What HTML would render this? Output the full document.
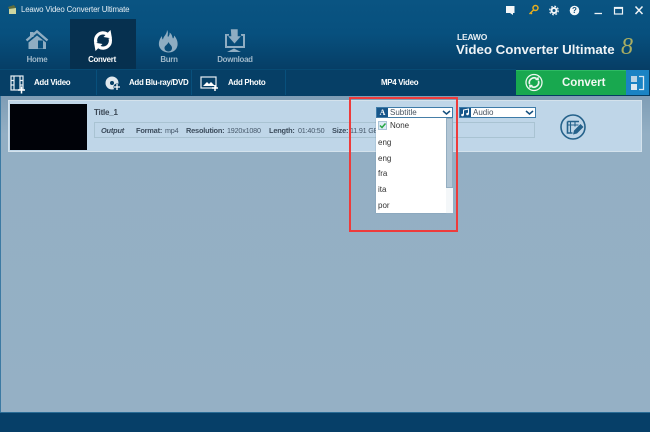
<!DOCTYPE html>
<html><head><meta charset="utf-8"><style>
html,body{margin:0;padding:0}
body{width:650px;height:432px;overflow:hidden;position:relative;background:#8fabc1;font-family:"Liberation Sans",sans-serif}
.a{position:absolute;white-space:nowrap}
.w{color:#fff;font-weight:bold;font-size:7.9px;letter-spacing:-.28px;line-height:12px}
.n{color:#9fb8c9;font-weight:bold;font-size:7.9px;letter-spacing:-.28px;line-height:12px;text-align:center}
.d{color:#46586a;font-size:7.2px;letter-spacing:-.2px;line-height:10px}
.db{color:#3c4c5c;font-size:7.4px;letter-spacing:-.2px;line-height:10px;font-weight:bold}
.o{left:378px;width:56px;color:#333;font-size:8px;line-height:12px}
</style></head><body>
<div class="a" style="left:0;top:0;width:650px;height:96px;background:linear-gradient(#0a5482,#07507e 35%,#063e66 72%,#063c62)"></div>
<div class="a" style="left:70px;top:19px;width:66px;height:50px;background:#06304f"></div>
<div class="a" style="left:0;top:69px;width:516px;height:27px;background:#063f66;border-top:1px solid #074a73;box-sizing:border-box"></div>
<div class="a" style="left:96px;top:70px;width:1px;height:25px;background:#08507c"></div>
<div class="a" style="left:191px;top:70px;width:1px;height:25px;background:#08507c"></div>
<div class="a" style="left:285px;top:70px;width:1px;height:25px;background:#08507c"></div>
<div class="a" style="left:0;top:96px;width:650px;height:316px;background:linear-gradient(#7f9db5,#93afc4 12%,#95b0c5)"></div>
<div class="a" style="left:0;top:96px;width:1px;height:316px;background:#3c7aa3"></div>
<div class="a" style="left:0;top:412px;width:650px;height:20px;background:#063f68;border-top:1px solid #2a6c96;box-sizing:border-box"></div>

<div class="a" style="left:21px;top:4px;color:#e4edf3;font-size:7.9px;letter-spacing:-.17px;line-height:12px">Leawo Video Converter Ultimate</div>
<svg class="a" style="left:0;top:0" width="650" height="100" viewBox="0 0 650 100">
<rect x="9" y="8" width="7" height="6" fill="#cdd6a0"/><path d="M8 7l6-2 2 3-7 1z" fill="#5d6b3c"/>
<!-- home -->
<path d="M26.500 40.500L37 31.500l10.500 9" fill="none" stroke="#8fadc2" stroke-width="2.400"/>
<rect x="30" y="32" width="3.500" height="5" fill="#8fadc2"/>
<path d="M37 35.500l-8.500 7V49h17.500v-6.500z" fill="#8fadc2"/>
<rect x="38" y="40.500" width="5" height="8" fill="#0a4f7b"/>
<!-- convert -->
<path d="M96 43A7.500 7.500 0 0 1 107 34" fill="none" stroke="#fff" stroke-width="3.200"/>
<path d="M103.500 37L112 38.500 110.500 30z" fill="#fff"/>
<path d="M110 38A7.500 7.500 0 0 1 99 47" fill="none" stroke="#fff" stroke-width="3.200"/>
<path d="M102.500 44L94 42.500 95.500 51z" fill="#fff"/>
<!-- burn -->
<path d="M167 30c2 3 0 5 1 7 1-1 2-3 1.500-4.500 3 2 2.500 4.500 3.500 6 1-.5 1-2 1-3 3 3 4 7 3.500 10-1 5-5 7-9 7s-8.500-2.500-9.500-7c-.5-4 1-7 3-9.500 0 1.500 0 3 1 3.500 .5-3.500 4-5 4-9.500z" fill="#8fadc2"/>
<path d="M168.500 42c1 2.500 3.500 3.500 3.500 6s-2 3.500-3.500 3.500-4-1-4-3.500 3-3 4-6z" fill="#0a4b76"/>
<!-- download -->
<path d="M229 35h-3v12h18V35h-3" fill="none" stroke="#8fadc2" stroke-width="2"/>
<path d="M230.500 29h7.500v7h3.500l-7 8-7-8h3.500z" fill="#8fadc2" stroke="#0a4f7b" stroke-width=".6"/>
<path d="M227 52l7-3.500 7 3.500z" fill="#8fadc2"/>
<!-- toolbar -->
<g fill="none" stroke="#e8eff4" stroke-width="1.200"><rect x="11" y="76" width="12" height="14"/><path d="M14 76v14M20 76v14M11 80.500h3M11 85h3M20 80.500h3M20 85h3"/></g><path d="M18 90h7M21.500 86.500v7" stroke="#fff" stroke-width="1.500"/>
<circle cx="112" cy="83" r="6.500" fill="#dfe8ee"/><circle cx="112" cy="83" r="2" fill="#063f66"/><circle cx="117" cy="87" r="3.500" fill="#063f66"/><path d="M114 87h6M117 84v6" stroke="#fff" stroke-width="1.300"/>
<rect x="201" y="77" width="15" height="11" fill="none" stroke="#e8eff4" stroke-width="1.200"/><path d="M203 86l4-4 2 2 2-2 4 4z" fill="#fff"/><path d="M212 88h6M215 85v6" stroke="#fff" stroke-width="1.500"/>
<!-- window controls -->
<rect x="506" y="6" width="8.500" height="7" fill="#f3f6f8"/><path d="M513 13v2l-3-2z" fill="#f3f6f8"/>
<circle cx="535.500" cy="8" r="2.500" fill="none" stroke="#e9ae1c" stroke-width="1.500"/><path d="M533.500 10l-4 4M530.500 12.500l1.500 1.500" stroke="#e9ae1c" stroke-width="1.400" fill="none"/>
<circle cx="554" cy="10.500" r="2.500" fill="none" stroke="#f2f5f7" stroke-width="2"/><circle cx="554" cy="10.500" r="4.300" fill="none" stroke="#f2f5f7" stroke-width="1.200" stroke-dasharray="1.800 1.600"/>
<circle cx="574.500" cy="10.500" r="4.800" fill="#f3f6f8"/>
<path d="M594.500 13.500h7.500" stroke="#eef3f6" stroke-width="1.300"/><rect x="614.500" y="7.500" width="8" height="6.500" fill="none" stroke="#eef3f6" stroke-width="1.200" /><path d="M614.500 8h8" stroke="#eef3f6" stroke-width="1.800"/>
<path d="M635.500 6.500l7 7.500M642.500 6.500l-7 7.500" stroke="#eef3f6" stroke-width="1.500"/>
</svg>
<div class="a" style="left:572px;top:5px;width:5px;text-align:center;color:#0a4f7b;font-size:8px;line-height:11px;font-weight:bold">?</div>

<div class="a n" style="left:16px;top:54px;width:42px">Home</div>
<div class="a w" style="left:80px;top:54px;width:44px;text-align:center;">Convert</div>
<div class="a n" style="left:148px;top:54px;width:42px">Burn</div>
<div class="a n" style="left:212px;top:54px;width:46px">Download</div>
<div class="a w" style="left:34px;top:77px">Add Video</div>
<div class="a w" style="left:129px;top:77px">Add Blu-ray/DVD</div>
<div class="a w" style="left:228px;top:77px">Add Photo</div>
<div class="a w" style="left:381px;top:77px">MP4 Video</div>

<div class="a" style="left:457px;top:32px;color:#e8eff4;font-weight:bold;font-size:8.500px;line-height:11px;letter-spacing:-.2px">LEAWO</div>
<div class="a" style="left:456px;top:42px;color:#eef3f6;font-weight:bold;font-size:13.300px;line-height:16px">Video Converter Ultimate</div>
<div class="a" style="left:621px;top:35px;color:#a9ad62;font-family:'Liberation Serif',serif;font-style:italic;font-size:24px;line-height:24px">8</div>

<div class="a" style="left:516px;top:70px;width:110px;height:25px;background:#18a84f;border-top:1px solid #2dbb63;box-sizing:border-box"></div>
<div class="a" style="left:562px;top:76px;color:#f2f8f3;font-weight:bold;font-size:11.500px;line-height:14px">Convert</div>
<svg class="a" style="left:516px;top:70px" width="134" height="26" viewBox="0 0 134 26">
<circle cx="18" cy="12.500" r="8" fill="none" stroke="#eef7f0" stroke-width="1.300"/>
<path d="M13.500 14A4.800 4.800 0 0 1 20.500 8.500" fill="none" stroke="#eef7f0" stroke-width="1.700"/><path d="M19 10L23 10.500 22.500 6.500z" fill="#eef7f0"/>
<path d="M22.500 11A4.800 4.800 0 0 1 15.500 16.500" fill="none" stroke="#eef7f0" stroke-width="1.700"/><path d="M17 15L13 14.500 13.500 18.500z" fill="#eef7f0"/>
<rect x="110" y="0" width="23" height="25" fill="#1a83c4"/>
<rect x="115" y="6" width="6" height="6" fill="#b9d3e4"/><rect x="115" y="14" width="6" height="6" fill="#dbe8f0"/><path d="M123 6.500h4.500v13H123" fill="none" stroke="#dbe8f0" stroke-width="1.300"/>
</svg>

<div class="a" style="left:8px;top:100px;background:#bfd6e8;border:1px solid #d4e2ec;width:632px;height:50px"></div>
<div class="a" style="left:10px;top:104px;width:77px;height:46px;background:#000208"></div>
<div class="a" style="left:94px;top:107px;color:#3b4754;font-size:8px;letter-spacing:-.2px;line-height:12px;font-weight:bold">Title_1</div>
<div class="a" style="left:94px;top:122px;width:441px;height:16px;border:1px solid #a9c3d2;box-sizing:border-box"></div>
<div class="a db" style="left:101px;top:126px;font-style:italic">Output</div>
<div class="a db" style="left:136px;top:126px">Format:</div>
<div class="a d" style="left:165px;top:126px">mp4</div>
<div class="a db" style="left:186px;top:126px">Resolution:</div>
<div class="a d" style="left:227px;top:126px">1920x1080</div>
<div class="a db" style="left:269px;top:126px">Length:</div>
<div class="a d" style="left:298px;top:126px">01:40:50</div>
<div class="a db" style="left:332px;top:126px">Size:</div>
<div class="a d" style="left:350px;top:126px">11.91 GB</div>

<svg class="a" style="left:560px;top:112px" width="30" height="30" viewBox="0 0 30 30">
<circle cx="13" cy="15" r="12" fill="none" stroke="#25628b" stroke-width="1.600"/>
<path d="M7.500 9.500h11.500M7.500 9.500V21h5" fill="none" stroke="#25628b" stroke-width="1.600"/>
<path d="M7.500 13h11M10.500 9.500V21M15 9.500v5" stroke="#25628b" stroke-width="1.100" fill="none"/>
<path d="M13 22.500l1-4 6.500-6.500 3 3-6.500 6.500z" fill="#25628b"/>
</svg>

<div class="a" style="left:376px;top:107px;width:77px;height:11px;background:#fff;border:1px solid #3d7ba8;box-sizing:border-box"></div>
<div class="a" style="left:377px;top:108px;width:11px;height:9px;background:#17568a;color:#fff;font:bold 8px/9px 'Liberation Serif',serif;text-align:center">A</div>
<div class="a" style="left:390px;top:106.500px;color:#46525e;font-size:8px;line-height:12px">Subtitle</div>
<svg class="a" style="left:442px;top:110px" width="10" height="6"><path d="M1 1l3.500 3L8 1" fill="none" stroke="#15507f" stroke-width="1.500"/></svg>

<div class="a" style="left:459px;top:107px;width:77px;height:11px;background:#fff;border:1px solid #3d7ba8;box-sizing:border-box"></div>
<div class="a" style="left:460px;top:108px;width:11px;height:9px;background:#17568a"></div>
<svg class="a" style="left:460px;top:108px" width="11" height="9"><path d="M3.500 7V2l5-1v5" fill="none" stroke="#fff"/><circle cx="2.500" cy="7" r="1.300" fill="#fff"/><circle cx="7.500" cy="6" r="1.300" fill="#fff"/></svg>
<div class="a" style="left:473px;top:106.500px;color:#46525e;font-size:8px;line-height:12px">Audio</div>
<svg class="a" style="left:525px;top:110px" width="10" height="6"><path d="M1 1l3.500 3L8 1" fill="none" stroke="#15507f" stroke-width="1.500"/></svg>

<div class="a" style="left:376px;top:118px;width:70px;height:95px;background:#fff;box-shadow:0 0 1px #6d8ba3"></div>
<div class="a" style="left:446px;top:118px;width:7px;height:95px;background:#f4f7f9"></div>
<div class="a" style="left:446px;top:118px;width:7px;height:70px;background:#b2c6d5;border:1px solid #94aec1;box-sizing:border-box"></div>
<div class="a" style="left:378px;top:121px;width:9px;height:9px;background:#dcebf5;border:1px solid #a9c3d6;box-sizing:border-box"></div>
<svg class="a" style="left:378px;top:121px" width="9" height="9"><path d="M2 4.500l2 2 3.500-4" fill="none" stroke="#28a745" stroke-width="1.500"/></svg>
<div class="a o" style="left:390px;top:120px">None</div>
<div class="a o" style="top:137px">eng</div>
<div class="a o" style="top:153px">eng</div>
<div class="a o" style="top:168px">fra</div>
<div class="a o" style="top:184px">ita</div>
<div class="a o" style="top:200px">por</div>

<div class="a" style="left:349px;top:97px;width:109px;height:135px;border:2px solid #ee3b3b;box-sizing:border-box"></div>
</body></html>
